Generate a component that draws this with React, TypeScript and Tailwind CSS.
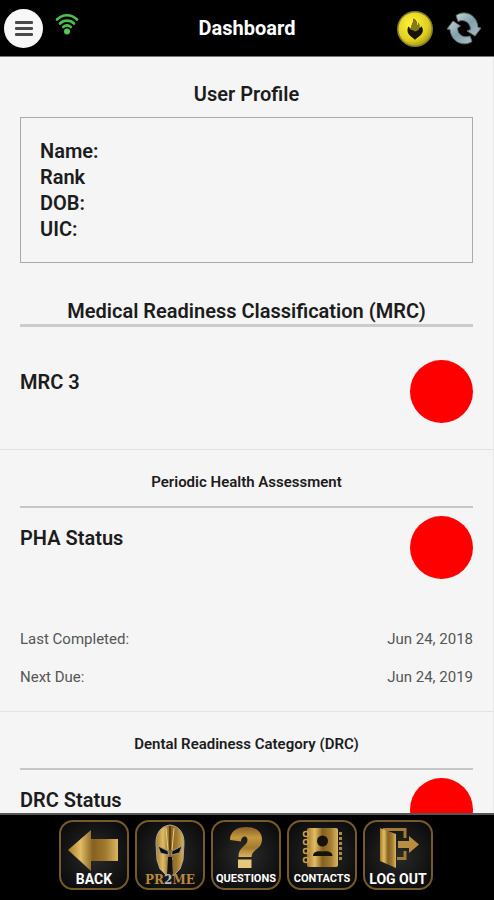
import React from "react";

function Gold() {
  return (
    <svg className="absolute h-0 w-0" aria-hidden="true">
      <defs>
        <linearGradient id="gold" x1="0" x2="1" y1="0" y2="0">
          <stop offset="0" stopColor="#a87c2c" />
          <stop offset="0.25" stopColor="#e0bd66" />
          <stop offset="0.5" stopColor="#86611f" />
          <stop offset="0.75" stopColor="#a07a30" />
          <stop offset="1" stopColor="#d9b660" />
        </linearGradient>
        <linearGradient id="goldDown" x1="0" x2="0" y1="0" y2="1">
          <stop offset="0" stopColor="#8a5c28" />
          <stop offset="0.35" stopColor="#c39a3c" />
          <stop offset="0.7" stopColor="#a17a30" />
          <stop offset="0.8" stopColor="#b98f3e" />
          <stop offset="1" stopColor="#d8b565" />
        </linearGradient>
        <radialGradient id="coin" cx="0.4" cy="0.35" r="0.7">
          <stop offset="0" stopColor="#fff23c" />
          <stop offset="0.7" stopColor="#e0d020" />
          <stop offset="1" stopColor="#a89a14" />
        </radialGradient>
        <linearGradient id="steel" x1="0" x2="1" y1="0" y2="1">
          <stop offset="0" stopColor="#c3d6dc" />
          <stop offset="0.5" stopColor="#7fa0ac" />
          <stop offset="1" stopColor="#a9c2ca" />
        </linearGradient>
      </defs>
    </svg>
  );
}

function Header() {
  return (
    <header className="grid h-[57px] shrink-0 grid-cols-3 items-center border-b border-[#777] bg-black">
      <div className="flex items-center gap-3 pl-1">
        <button aria-label="Menu" className="flex h-[39px] w-[39px] items-center justify-center rounded-full bg-[#f7f7f7]">
          <svg width="18" height="15" viewBox="0 0 18 15" fill="#4a4a4a">
            <rect width="18" height="3" rx="1" />
            <rect y="6" width="18" height="3" rx="1" />
            <rect y="12" width="18" height="3" rx="1" />
          </svg>
        </button>
        <svg className="mb-2" width="24" height="22" viewBox="0 0 24 22" fill="none" stroke="#4fc04f" strokeWidth="2.600" strokeLinecap="round" role="img" aria-label="Online">
          <path d="M2 6.500C7.500 .8 16.500 .8 22 6.500" />
          <path d="M5 10.500C9 6.700 15 6.700 19 10.500" />
          <path d="M8.200 14C10.500 12 13.500 12 15.800 14" />
          <circle cx="12" cy="18.500" r="3" fill="#55c955" stroke="none" />
        </svg>
      </div>
      <h1 className="text-center text-[20px] leading-6 font-bold text-white">Dashboard</h1>
      <div className="flex items-center justify-end gap-3 pr-3">
        <button aria-label="Burn">
          <svg width="38" height="38" viewBox="0 0 38 38">
            <circle cx="19" cy="20" r="18" fill="#837b2c" />
            <circle cx="19" cy="20" r="16.500" fill="url(#coin)" />
            <path d="M19 31C17.500 28.500 11.500 26.500 11.500 21.500C11.500 19.500 12 18 12.500 17.500C13.500 19 14.800 19.500 15.800 19.200C14.500 15.500 18 14 17.500 9.500C20 11 21.500 13.500 21 16.500C22.200 15.800 22.500 14.500 22.300 13.500C24 15.500 23 17.500 23.500 19C24.500 18.800 25 18 25 17C26.500 18.500 27 20 26.800 22C26.300 26.500 20.500 28.500 19 31Z" fill="#16140a" />
            <path d="M12.500 17.500C13.500 19 14.800 19.500 15.800 19.200C14.500 15.500 18 14 17.500 9.500C20 11 21.500 13.500 21 16.500C22.200 15.800 22.500 14.500 22.300 13.500C24 15.500 23 17.500 23.500 19C22.500 22 20.500 21.500 19 22.500C17 20.500 14 22 12.500 17.500Z" fill="#857b16" />
          </svg>
        </button>
        <button aria-label="Refresh">
          <svg width="36" height="36" viewBox="0 0 36 36" fill="url(#steel)" stroke="#6a6660" strokeWidth="1" strokeLinejoin="round">
            <path d="M10 5.500C18 -.5 31 4 32 17.500L35 18L29 26L21 21L24.500 19.500C24.500 13 18.500 8.500 12 11.500Z" />
            <path d="M26 31.500C17 37.500 5 31.500 4 19.500L1 19L7 11L14.500 16L11.500 18C11.500 24.500 17 28.500 24 26Z" />
          </svg>
        </button>
      </div>
    </header>
  );
}

function StatusRow({ label }: { label: string }) {
  return (
    <div className="flex items-start justify-between">
      <p className="pt-2 text-[20px] leading-7 font-semibold">{label}</p>
      <span role="img" aria-label="Not ready" className="h-[63px] w-[63px] rounded-full bg-[#ff0000]" />
    </div>
  );
}

function DateRow({ label, value }: { label: string; value: string }) {
  return (
    <div className="flex justify-between text-[15px] leading-5 text-[#555]">
      <dt>{label}</dt>
      <dd>{value}</dd>
    </div>
  );
}

function Category({ title, status, children }: { title: string; status: string; children?: React.ReactNode }) {
  return (
    <section className="border-t border-[#e2e2e2] px-5 pt-[22px] pb-6">
      <h2 className="mb-2 border-b-2 border-[#c6c6c6] pb-[14px] text-center text-[15px] leading-5 font-semibold">{title}</h2>
      <StatusRow label={status} />
      {children}
    </section>
  );
}

function Tile({ label, labelClass, children }: { label: React.ReactNode; labelClass: string; children: React.ReactNode }) {
  return (
    <button className="flex h-[70px] w-[70px] flex-col items-center rounded-[14px] border-2 border-[#765a2c] bg-radial from-[#2b2b2b] to-[#080808]">
      <svg className="shrink-0 overflow-visible" width="66" height="50" viewBox="2 2 66 50" aria-hidden="true">
        {children}
      </svg>
      <span className={labelClass}>{label}</span>
    </button>
  );
}

const shortLabel = "whitespace-nowrap text-[14px] leading-[14px] font-bold text-white";
const longLabel = "whitespace-nowrap text-[11px] leading-[14px] font-bold text-white";
const primeLabel =
  "relative whitespace-nowrap text-[12px] leading-[17px] font-bold text-[#b98a3c] font-['DejaVu_Serif',serif]";

function Footer() {
  return (
    <footer className="shrink-0 border-t-2 border-[#555] bg-black pt-[5px] pr-0.5 pb-[10px]">
      <nav className="flex justify-center gap-1.5">
        <Tile label="BACK" labelClass={shortLabel}>
          <path d="M9 30L32 10V19H59V41H32V51Z" fill="url(#gold)" />
        </Tile>
        <Tile
          label={
            <>
              PR<span className="text-[#b8bcc0]">2</span>ME
            </>
          }
          labelClass={primeLabel}
        >
          <path d="M35 5C26 6 20.500 13 21 24L22 40L25 49L32 56L33.500 41L32.500 38H37.500L36.500 41L38 56L45 49L48 40L49 24C49.500 13 44 6 35 5Z" fill="url(#gold)" stroke="#a9a49a" strokeWidth="1" />
          <path d="M35 6V30" stroke="#5c3f12" strokeWidth="2" />
          <path d="M31 8L33 30M39 8L37 30" stroke="#e8cd80" strokeWidth="1" />
          <path d="M23 26L33 31L33.500 35L25.500 33Z M47 26L37 31L36.500 35L44.500 33Z" fill="#101010" stroke="#aaa9a5" strokeWidth="0.800" />
          <path d="M33 37H37L38 55L35 51L32 55Z" fill="#111" />
        </Tile>
        <Tile label="QUESTIONS" labelClass={longLabel}>
          <path d="M19 20C19 11 26 7 35 7C45 7 51 12 51 19C51 30 40.500 29 40.500 37H27.500C27 27 36.500 26 36.500 20C36.500 15 30 15.500 30 21.500Z" fill="url(#goldDown)" />
          <rect x="27" y="39.500" width="13.500" height="8.500" fill="#e7c878" />
        </Tile>
        <Tile label="CONTACTS" labelClass={longLabel}>
          <rect x="20" y="8" width="31" height="39" rx="2" fill="url(#gold)" />
          <path d="M53.500 12V41" stroke="#b08a40" strokeWidth="3" strokeDasharray="3 2" />
          <g fill="none" stroke="#c79f4c" strokeWidth="1.600">
            <circle cx="19" cy="14" r="2.500" />
            <circle cx="19" cy="22" r="2.500" />
            <circle cx="19" cy="31" r="2.500" />
            <circle cx="19" cy="40" r="2.500" />
          </g>
          <circle cx="35.500" cy="21" r="5.500" fill="#17130b" />
          <path d="M26 36C26 32 30 30.500 35.500 31.500C41 30.500 45.500 32 45.500 36Z" fill="#17130b" />
        </Tile>
        <Tile label="LOG OUT" labelClass={shortLabel}>
          <path d="M20 9.500H42V18M42 31V38.500H34" fill="none" stroke="#a27b34" strokeWidth="3" />
          <path d="M17 8L33 14V48L17 41Z" fill="url(#gold)" />
          <path d="M35 21H46V16L56 24.500L46 33V28H35Z" fill="#b88f40" />
        </Tile>
      </nav>
    </footer>
  );
}

export default function App() {
  return (
    <div className="flex h-screen flex-col overflow-hidden bg-[#f5f5f5] font-[Roboto,sans-serif] text-[#1c1c1c]">
      <Gold />
      <Header />
      <main className="min-h-0 flex-1 overflow-hidden border-r border-[#e9e9e9]">
        <section className="px-5 pt-6 pb-[26px]">
          <h2 className="text-center text-[20px] leading-[26px] font-semibold">User Profile</h2>
          <ul className="mt-[10px] border border-[#aaa] px-[19px] py-5 text-[20px] leading-[26px] font-semibold">
            <li>Name:</li>
            <li>Rank</li>
            <li>DOB:</li>
            <li>UIC:</li>
          </ul>
          <h2 className="mt-[35px] mb-[33px] border-b-[3px] border-[#ccc] text-center text-[20px] leading-[26px] font-semibold">
            Medical Readiness Classification (MRC)
          </h2>
          <StatusRow label="MRC 3" />
        </section>
        <Category title="Periodic Health Assessment" status="PHA Status">
          <dl className="mt-[50px] flex flex-col gap-[18px]">
            <DateRow label="Last Completed:" value="Jun 24, 2018" />
            <DateRow label="Next Due:" value="Jun 24, 2019" />
          </dl>
        </Category>
        <Category title="Dental Readiness Category (DRC)" status="DRC Status" />
      </main>
      <Footer />
    </div>
  );
}
